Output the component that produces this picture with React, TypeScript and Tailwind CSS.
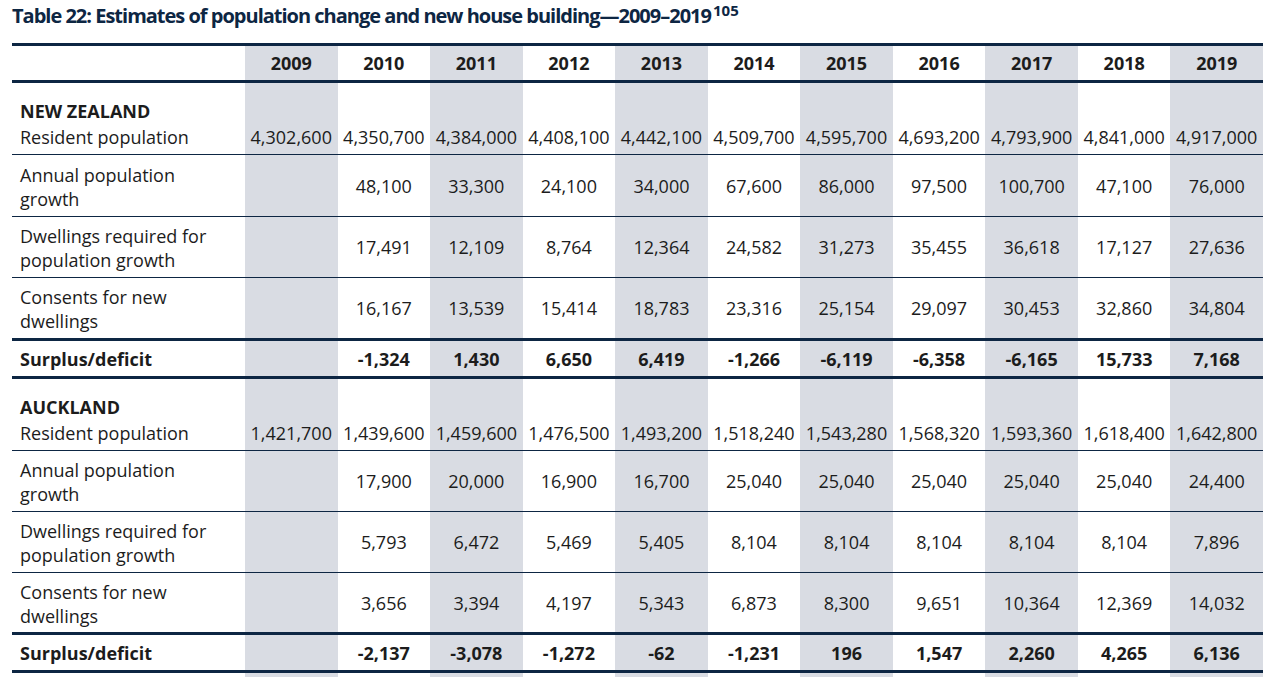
const years = ["2009", "2010", "2011", "2012", "2013", "2014", "2015", "2016", "2017", "2018", "2019"];

type Row = { label: string[]; values: string[]; bold?: boolean; h: string };

const sections: { name: string; resident: string[]; rows: Row[] }[] = [
  {
    name: "NEW ZEALAND",
    resident: ["4,302,600", "4,350,700", "4,384,000", "4,408,100", "4,442,100", "4,509,700", "4,595,700", "4,693,200", "4,793,900", "4,841,000", "4,917,000"],
    rows: [
      { label: ["Annual population", "growth"], h: "h-[61px]", values: ["", "48,100", "33,300", "24,100", "34,000", "67,600", "86,000", "97,500", "100,700", "47,100", "76,000"] },
      { label: ["Dwellings required for", "population growth"], h: "h-[60px]", values: ["", "17,491", "12,109", "8,764", "12,364", "24,582", "31,273", "35,455", "36,618", "17,127", "27,636"] },
      { label: ["Consents for new", "dwellings"], h: "h-[60px]", values: ["", "16,167", "13,539", "15,414", "18,783", "23,316", "25,154", "29,097", "30,453", "32,860", "34,804"] },
    ],
  },
  {
    name: "AUCKLAND",
    resident: ["1,421,700", "1,439,600", "1,459,600", "1,476,500", "1,493,200", "1,518,240", "1,543,280", "1,568,320", "1,593,360", "1,618,400", "1,642,800"],
    rows: [
      { label: ["Annual population", "growth"], h: "h-[60px]", values: ["", "17,900", "20,000", "16,900", "16,700", "25,040", "25,040", "25,040", "25,040", "25,040", "24,400"] },
      { label: ["Dwellings required for", "population growth"], h: "h-[60px]", values: ["", "5,793", "6,472", "5,469", "5,405", "8,104", "8,104", "8,104", "8,104", "8,104", "7,896"] },
      { label: ["Consents for new", "dwellings"], h: "h-[59px]", values: ["", "3,656", "3,394", "4,197", "5,343", "6,873", "8,300", "9,651", "10,364", "12,369", "14,032"] },
    ],
  },
];

const surplus = [
  ["", "-1,324", "1,430", "6,650", "6,419", "-1,266", "-6,119", "-6,358", "-6,165", "15,733", "7,168"],
  ["", "-2,137", "-3,078", "-1,272", "-62", "-1,231", "196", "1,547", "2,260", "4,265", "6,136"],
];

const grid = "grid grid-cols-[233px_repeat(11,1fr)]";

function Cells({ values, bold, align = "items-center", pad = "" }: { values: string[]; bold?: boolean; align?: string; pad?: string }) {
  return (
    <>
      {values.map((v, i) => (
        <div
          key={i}
          className={`flex justify-center ${align} ${pad} ${i % 2 === 0 ? "bg-[#d9dce3]" : ""} ${bold ? "font-bold" : ""}`}
        >
          {v}
        </div>
      ))}
    </>
  );
}

function Thick() {
  return <div className="h-[3px] bg-[#0d2643]" />;
}

function Thin() {
  return <div className="h-px bg-[#0d2643]" />;
}

export default function App() {
  return (
    <div className="h-[677px] w-[1264px] overflow-hidden bg-white text-[18px] leading-[24px] text-[#1c1c1c] [font-family:'Open_Sans',sans-serif]">
      <div className="h-[43px] pl-[12px] pt-[2px]">
        <h1 className="text-[20px] leading-[28px] font-bold tracking-[-1px] text-[#0d2643]">
          Table 22: Estimates of population change and new house building—2009–2019
          <sup className="ml-[2px] text-[15px] font-bold tracking-normal">105</sup>
        </h1>
      </div>

      <div className="ml-[12px] w-[1251px]">
        <Thick />
        <div className={`${grid} h-[34px] font-bold`}>
          <div />
          <Cells values={years} bold />
        </div>
        <Thick />

        {sections.map((s, si) => (
          <div key={s.name}>
            <div className={`${grid} h-[71px]`}>
              <div className="flex flex-col pl-[8px] pt-[16px]">
                <span className="font-bold">{s.name}</span>
                <span className="mt-[2px]">Resident population</span>
              </div>
              <Cells values={s.resident} align="items-end" pad="pb-[5px]" />
            </div>
            {s.rows.map((r) => (
              <div key={r.label[0]}>
                <Thin />
                <div className={`${grid} ${r.h}`}>
                  <div className="flex flex-col justify-center pl-[8px] pt-[2px]">
                    {r.label.map((l) => (
                      <span key={l}>{l}</span>
                    ))}
                  </div>
                  <Cells values={r.values} />
                </div>
              </div>
            ))}
            <Thick />
            <div className={`${grid} h-[35px]`}>
              <div className="flex items-center pl-[8px] font-bold">Surplus/deficit</div>
              <Cells values={surplus[si]} bold />
            </div>
            <Thick />
          </div>
        ))}
        <div className={`${grid} h-[10px]`}>
          <div />
          <Cells values={years.map(() => "")} />
        </div>
      </div>
    </div>
  );
}
